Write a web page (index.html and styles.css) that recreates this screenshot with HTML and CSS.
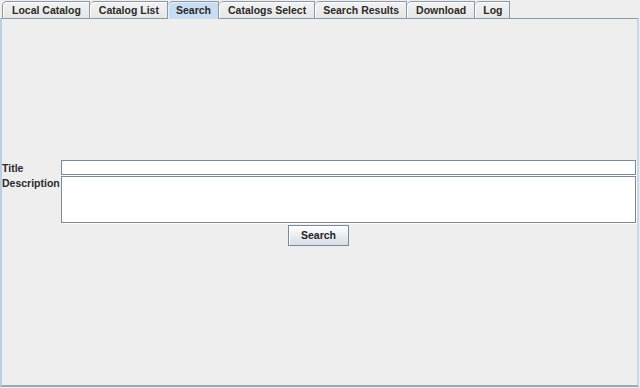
FILE: index.html
```html
<!DOCTYPE html>
<html>
<head>
<meta charset="utf-8">
<link rel="stylesheet" href="styles.css">
</head>
<body>
<div class="window">
  <div class="tabs">
    <div class="tab">Local Catalog</div>
    <div class="tab">Catalog List</div>
    <div class="tab selected narrow">Search</div>
    <div class="tab">Catalogs Select</div>
    <div class="tab narrow">Search Results</div>
    <div class="tab">Download</div>
    <div class="tab narrow">Log</div>
  </div>
  <div class="panel">
    <div class="form">
      <div class="row">
        <label class="label">Title</label>
        <div class="field title"></div>
      </div>
      <div class="row">
        <label class="label">Description</label>
        <div class="field desc"></div>
      </div>
      <div class="actions">
        <button class="btn">Search</button>
      </div>
    </div>
  </div>
</div>
</body>
</html>
```

FILE: styles.css
```css
html, body {
  margin: 0;
  padding: 0;
  background: #eeeeee;
}
body {
  width: 640px;
  height: 388px;
  overflow: hidden;
  font-family: "Liberation Sans", Arial, sans-serif;
  font-weight: bold;
  font-size: 10.5px;
  color: #2a2a2a;
}
.window {
  display: flex;
  flex-direction: column;
  height: 388px;
}
.tabs {
  display: flex;
  padding: 1px 0 0 2px;
  height: 17px;
  position: relative;
  z-index: 1;
}
.tab {
  height: 16px;
  line-height: 16px;
  padding: 0 8px 0 9px;
  border: 1px solid #8a99aa;
  border-bottom: none;
  border-left: none;
  border-top-left-radius: 5px 5px;
  background: linear-gradient(#f2f2f2, #e6e6e6);
  box-shadow: inset 1px 1px 0 #ffffff;
}
.tab.narrow {
  padding: 0 7px 0 8px;
}
.tab:first-child {
  border-left: 1px solid #8a99aa;
}
.tab.selected {
  background: #c8ddf2;
  box-shadow: inset 1px 1px 0 #e6eef8;
  height: 17px;
}
.panel {
  flex: 1;
  display: flex;
  flex-direction: column;
  justify-content: center;
  border-top: 1px solid #8a99aa;
  border-left: 2px solid #b8cfe5;
  border-right: 2px solid #c8d8e8;
  border-bottom: 2px solid #9aa9b8;
  background: #eeeeee;
  box-sizing: border-box;
  margin-right: 1px;
  margin-bottom: 1px;
}
.form {
  display: flex;
  flex-direction: column;
  gap: 1px;
  padding-top: 1px;
}
.row {
  display: flex;
  align-items: flex-start;
}
.label {
  width: 59px;
  line-height: 14px;
  white-space: nowrap;
}
.row:first-child .label {
  padding-top: 1px;
}
.field {
  flex: 1;
  background: #ffffff;
  border: 1px solid #7a8a99;
  box-shadow: 1px 1px 0 #ffffff;
  margin-right: 1px;
}
.title { height: 13px; }
.desc { height: 45px; }
.actions {
  display: flex;
  justify-content: center;
  padding-top: 1px;
}
.btn {
  font: inherit;
  color: #222222;
  width: 61px;
  height: 21px;
  padding: 0;
  border: 1px solid #7a8a99;
  background: linear-gradient(#ffffff, #e8ecf2 55%, #d6dde6);
  box-shadow: inset 1px 1px 0 #ffffff;
  margin-right: 2px;
}
```
